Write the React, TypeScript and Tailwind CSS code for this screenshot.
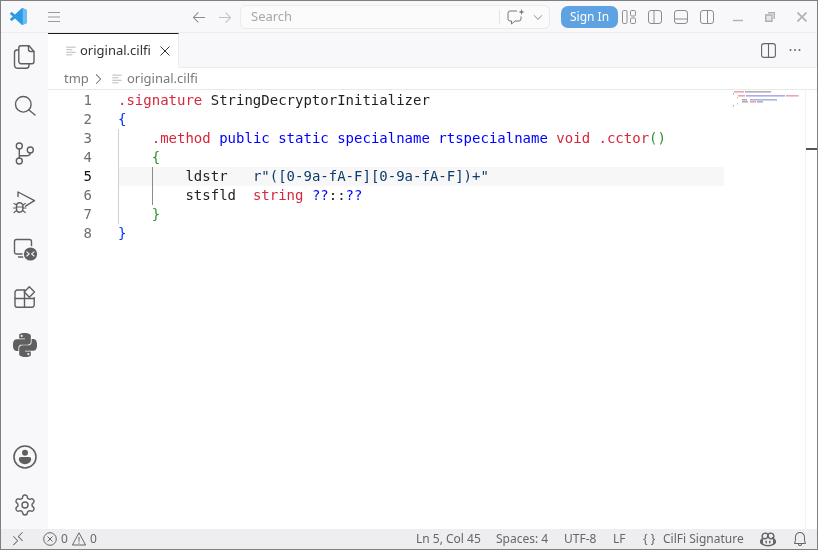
import React from "react";
import {
  VscArrowLeft, VscArrowRight, VscCopilot, VscBell, VscRemote, VscChevronDown, VscChevronRight,
} from "react-icons/vsc";
import { SiPython } from "react-icons/si";
import { Settings } from "lucide-react";

const R = ({ c, children }: { c: string; children: React.ReactNode }) => <span className={c}>{children}</span>;

const FileLines = ({ className }: { className: string }) => (
  <svg viewBox="0 0 14 14" className={className} fill="none" stroke="currentColor" strokeWidth="1">
    <path d="M1.5 2.5h11M1.5 5.5h7M1.5 8.5h11M1.5 11.5h7" />
  </svg>
);

const Ic = ({ children }: { children: React.ReactNode }) => (
  <div className="h-[48px] w-full flex items-center justify-center shrink-0">
    <svg viewBox="0 0 24 24" className="w-[24px] h-[24px] overflow-visible" fill="none" stroke="currentColor" strokeWidth="1.4" strokeLinecap="round" strokeLinejoin="round">
      {children}
    </svg>
  </div>
);

const Box = ({ children }: { children?: React.ReactNode }) => (
  <svg viewBox="0 0 14 14" className="w-[14px] h-[14px] overflow-visible" fill="none" stroke="currentColor" strokeWidth="1">
    <rect x="0.5" y="0.5" width="13" height="13" rx="2.5" />
    {children}
  </svg>
);

const lines: React.ReactNode[] = [
  <><R c="text-[#d7263d]">.signature</R> StringDecryptorInitializer</>,
  <R c="text-[#0431fa]">{"{"}</R>,
  <>{"    "}<R c="text-[#d7263d]">.method</R> <R c="text-[#0000ff]">public static specialname rtspecialname</R> <R c="text-[#d7263d]">void .cctor</R><R c="text-[#319331]">()</R></>,
  <>{"    "}<R c="text-[#319331]">{"{"}</R></>,
  <>{"        "}ldstr{"   "}<R c="text-[#0f3a6b]">r"([0-9a-fA-F][0-9a-fA-F])+"</R></>,
  <>{"        "}stsfld{"  "}<R c="text-[#d7263d]">string</R> <R c="text-[#0000ff]">??</R>::<R c="text-[#0000ff]">??</R></>,
  <>{"    "}<R c="text-[#319331]">{"}"}</R></>,
  <R c="text-[#0431fa]">{"}"}</R>,
];

const RED = "#f0a3ad";
const BLU = "#a9a9f8";
const GRY = "#b0b0b0";
const GRN = "#b3d6b3";
const mini: [number, number, number, string][] = [
  [0, 0, 10, RED], [11, 0, 26, GRY],
  [-1, 2, 1, BLU],
  [4, 4, 7, RED], [12, 4, 39, BLU], [52, 4, 11, RED], [63, 4, 2, GRN],
  [3, 6, 1, GRN],
  [8, 8, 5, GRY], [16, 8, 27, "#a9bad2"],
  [8, 10, 6, GRY], [16, 10, 6, RED], [23, 10, 2, BLU], [25, 10, 2, GRY], [27, 10, 2, BLU],
  [3, 12, 1, GRN],
  [-1, 14, 1, BLU],
];

export default function App() {
  return (
    <div className="w-[818px] h-[550px] flex flex-col overflow-hidden bg-white border border-[#7f7f7f] font-['Noto_Sans',sans-serif] text-[13px] text-[#616161] [&_span]:[will-change:transform]">
      {/* title bar */}
      <div className="h-[32px] shrink-0 flex items-center bg-[#f8f8fa] border-b border-[#ececec]">
        <svg viewBox="0 0 100 100" className="w-[17px] h-[17px] ml-[9px]">
          <path fill="#2f9ae4" d="M70.9119 99.3171C72.4869 99.9307 74.2828 99.8914 75.8725 99.1264L96.4608 89.2197C98.6242 88.1787 100 85.9892 100 83.5872V16.4133C100 14.0113 98.6243 11.8218 96.4609 10.7808L75.8725 0.873756C73.7862 -0.130129 71.3446 0.11576 69.5135 1.44695C69.252 1.63711 69.0028 1.84943 68.769 2.08341L29.3551 38.0415L12.1872 25.0096C10.589 23.7965 8.35363 23.8959 6.86933 25.2461L1.36303 30.2549C-0.452552 31.9064 -0.454633 34.7627 1.35853 36.417L16.2471 50.0001L1.35853 63.5832C-0.454633 65.2374 -0.452552 68.0938 1.36303 69.7453L6.86933 74.7541C8.35363 76.1043 10.589 76.2037 12.1872 74.9905L29.3551 61.9587L68.769 97.9167C69.3925 98.5406 70.1246 99.0104 70.9119 99.3171ZM75.0152 27.2989L45.1091 50.0001L75.0152 72.7012V27.2989Z" />
          <path fill="#6dbdf3" d="M96.4614 10.7962L75.8569 0.875542C73.4719 -0.272773 70.6217 0.211611 68.75 2.08333C71.0562 -0.223028 75 1.41031 75 4.67179V95.3281C75 98.5896 71.0562 100.223 68.75 97.9167C70.6217 99.7884 73.4719 100.273 75.8569 99.1244L96.4614 89.2038C98.6242 88.1624 100 85.9728 100 83.5728V16.4272C100 14.0272 98.6242 11.8376 96.4614 10.7962Z" />
        </svg>
        <svg viewBox="0 0 12 10" className="w-[12px] h-[10px] ml-[21px] text-[#9a9a9a]" fill="none" stroke="currentColor" strokeWidth="1"><path d="M0 .5h12M0 5h12M0 9.5h12" /></svg>
        <VscArrowLeft className="w-[16px] h-[16px] ml-[131px] text-[#8c8c8c]" />
        <VscArrowRight className="w-[16px] h-[16px] ml-[10px] text-[#c0c0c0]" />
        <div className="ml-[7px] w-[310px] h-[24px] rounded-md border border-[#eaeaea] bg-[#fbfbfc] flex items-center pl-[10px] text-[#a8a8a8]">
          <span>Search</span>
          <div className="ml-auto w-px h-[14px] bg-[#e4e4e4]" />
          <svg viewBox="0 0 18 16" className="w-[18px] h-[16px] ml-[7px] overflow-visible text-[#777]" fill="none" stroke="currentColor" strokeWidth="1" strokeLinejoin="round">
            <path d="M10 2H3a2 2 0 0 0-2 2v6a2 2 0 0 0 2 2h1.5v3l3.5-3h4a2 2 0 0 0 2-2V7.5" />
            <path d="M14.5 0l.8 2.2 2.2.8-2.2.8-.8 2.2-.8-2.2-2.2-.8 2.2-.8z" fill="currentColor" stroke="none" />
          </svg>
          <VscChevronDown className="w-[14px] h-[14px] ml-[6px] mr-[4px] text-[#999]" />
        </div>
        <div className="ml-[11px] w-[57px] h-[22px] rounded-[7px] bg-[#5ea2e2] text-white text-[12px] flex items-center justify-center"><span>Sign In</span></div>
        <div className="ml-[4px] flex items-center gap-[12px] text-[#8c8c8c]">
          <svg viewBox="0 0 14 14" className="w-[14px] h-[14px]" fill="none" stroke="currentColor"><rect x="0.5" y="0.5" width="4.5" height="13" rx="1.2" /><rect x="8.5" y="0.5" width="5" height="5.5" rx="1.2" /><rect x="8.5" y="8" width="5" height="5.5" rx="1.2" /></svg>
          <Box><path d="M6 .5v13" /></Box>
          <Box><path d="M.5 9h13" /></Box>
          <Box><path d="M7.5 .5v13" /></Box>
        </div>
        <div className="ml-auto flex items-center gap-[22px] mr-[10px] text-[#b0b0b0]">
          <svg viewBox="0 0 10 10" className="w-[10px] h-[10px]" fill="none" stroke="currentColor" strokeWidth="1.4"><path d="M0 8.5h10" /></svg>
          <svg viewBox="0 0 10 10" className="w-[10px] h-[10px]" fill="none" stroke="currentColor" strokeWidth="1.4"><path d="M.7 3h6.3v6.3H.7z" fill="currentColor" fillOpacity="0.25" /><path d="M3 .7h6.3V7" /></svg>
          <svg viewBox="0 0 10 10" className="w-[10px] h-[10px]" fill="none" stroke="currentColor" strokeWidth="1.6"><path d="M.5.5l9 9M9.5.5l-9 9" /></svg>
        </div>
      </div>

      <div className="flex-1 flex min-h-0">
        {/* activity bar */}
        <div className="w-[47px] shrink-0 bg-[#f8f8fa] flex flex-col items-center text-[#5f5f5f]">
          <Ic>
            <path d="M8 .8h8l5 5.7v10a2.2 2.2 0 0 1-2.2 2.2H8a2.2 2.2 0 0 1-2.2-2.2V3A2.2 2.2 0 0 1 8 .8z" />
            <path d="M15.5 1v3.5a2 2 0 0 0 2 2h3.3" />
            <path d="M5.5 5H4A2.6 2.6 0 0 0 1.5 7.5v12.2A3.6 3.6 0 0 0 5 23.3h8.5a2.6 2.6 0 0 0 2.5-2.5v-1.8" />
          </Ic>
          <Ic>
            <circle cx="10.3" cy="11.3" r="7.8" />
            <path d="M16 17l6 5" />
          </Ic>
          <Ic>
            <circle cx="6.3" cy="5" r="3" />
            <circle cx="17.3" cy="9" r="3" />
            <circle cx="6.3" cy="20" r="3" />
            <path d="M6.3 8v9M17.3 12a3 3 0 0 1-3 2.7H6.3" />
          </Ic>
          <Ic>
            <path d="M5 7.5V3l16.5 8.7-9 5.5" />
            <path d="M3.5 17a3.2 3.2 0 0 1 6.4 0v3a3.2 3.2 0 0 1-6.4 0z" strokeWidth="1.4" />
            <path d="M3.5 18h6.4M1 14.5l2.7 1.5M12.3 14.5L9.7 16M.5 19h3M10 19h3M1 23.5l2.7-2M12.3 23.5l-2.7-2" strokeWidth="1.2" />
          </Ic>
          <Ic>
            <rect x="1.5" y="2.5" width="17" height="14.5" rx="2" />
            <path d="M5.5 20h6" />
            <circle cx="17.5" cy="17" r="8" fill="#f8f8fa" stroke="none" />
            <circle cx="17.5" cy="17" r="6.6" fill="currentColor" stroke="none" />
            <path d="M13.8 14.8l2.4 2-2.4 2.2M21 14.8l-2.4 2 2.4 2.2" stroke="#f8f8fa" strokeWidth="1.1" />
          </Ic>
          <Ic>
            <path d="M11.5 5H4.2a2.2 2.2 0 0 0-2.2 2.2V20a2.2 2.2 0 0 0 2.2 2.2H19a2.2 2.2 0 0 0 2.2-2.2v-7" />
            <path d="M2 13.5h19.2V13M11.5 5v17" />
            <path d="M16.3 1.8l5.2 5.2-5.2 5.2-5-5.2z" />
          </Ic>
          <div className="h-[48px] w-full flex items-center justify-center shrink-0">
            <SiPython className="w-[24px] h-[24px]" />
          </div>
          <div className="mt-auto w-full">
            <Ic>
              <circle cx="12" cy="12" r="11" strokeWidth="1.6" />
              <circle cx="12" cy="7.8" r="3" fill="currentColor" stroke="none" />
              <path d="M5.8 14a2 2 0 0 1 2-2h8.4a2 2 0 0 1 2 2c0 3-3 5.2-6.2 5.2S5.8 17 5.8 14z" fill="currentColor" stroke="none" />
            </Ic>
            <div className="h-[48px] w-full flex items-center justify-center">
              <Settings className="w-[24px] h-[24px]" strokeWidth={1.4} />
            </div>
          </div>
        </div>

        {/* editor column */}
        <div className="flex-1 flex flex-col min-w-0">
          <div className="h-[35px] shrink-0 flex bg-[#f8f8fa] border-b border-[#ececec]">
            <div className="w-[131px] h-[35px] bg-white border-t border-t-[#1a1a1a] border-r border-r-[#ececec] flex items-center pl-[17px]">
              <FileLines className="w-[12px] h-[12px] text-[#b0b0b0]" />
              <span className="ml-[3px] text-[#333]">original.cilfi</span>
              <svg viewBox="0 0 10 10" className="w-[10px] h-[10px] ml-[9px] text-[#333]" fill="none" stroke="currentColor" strokeWidth="1"><path d="M.5.5l9 9M9.5.5l-9 9" /></svg>
            </div>
            <div className="ml-auto flex items-center gap-[11px] mr-[14px] text-[#666]">
              <svg viewBox="0 0 15 15" className="w-[15px] h-[15px]" fill="none" stroke="currentColor" strokeWidth="1.1"><rect x="0.6" y="0.6" width="13.8" height="13.8" rx="2.5" /><path d="M7.5 .6v13.8" /></svg>
              <svg viewBox="0 0 16 16" className="w-[16px] h-[16px]" fill="currentColor"><circle cx="3.5" cy="8" r="1" /><circle cx="8" cy="8" r="1" /><circle cx="12.5" cy="8" r="1" /></svg>
            </div>
          </div>
          <div className="h-[22px] shrink-0 flex items-center pl-[16px] text-[#7a7a7a] border-b border-[#e9e9e9]">
            <span className="pt-[1px]">tmp</span>
            <VscChevronRight className="w-[16px] h-[16px] ml-[1px] text-[#666]" />
            <FileLines className="w-[12px] h-[12px] ml-[5px] text-[#b0b0b0]" />
            <span className="ml-[4px] pt-[1px]">original.cilfi</span>
          </div>

          <div className="flex-1 flex min-h-0 font-['DejaVu_Sans_Mono',monospace] text-[14px] leading-[19px]">
            {/* gutter */}
            <div className="w-[70px] shrink-0 pt-[1px] text-[#6e6e6e] text-right [will-change:transform]">
              {lines.map((_, i) => (
                <div key={i} className={i === 4 ? "h-[19px] pr-[26px] text-[#111]" : "h-[19px] pr-[26px]"}>{i + 1}</div>
              ))}
            </div>
            {/* code */}
            <div className="relative w-[606px] shrink-0 pt-[1px] text-[#222] whitespace-pre">
              <div className="absolute left-0 right-0 top-[77px] h-[19px] bg-[#f7f7f7]" />
              <div className="absolute left-0 top-[39px] h-[95px] w-px bg-[#d0d0d0]" />
              <div className="absolute left-[34px] top-[77px] h-[38px] w-px bg-[#8c8c8c]" />
              <div className="relative [will-change:transform] [&_span]:[will-change:auto]">
                {lines.map((l, i) => <div key={i} className="h-[19px]">{l}</div>)}
              </div>
            </div>
            {/* minimap */}
            <div className="w-[81px] shrink-0 pl-[9px] pt-[1px]">
              <svg viewBox="-1 0 72 16" className="w-[72px] h-[16px] block">
                {mini.map(([x, y, w, f], i) => <rect key={i} x={x} y={y} width={w} height="1.6" fill={f} />)}
              </svg>
            </div>
            {/* ruler */}
            <div className="relative flex-1 border-l border-[#f2f2f2]">
              <div className="absolute left-0 right-0 top-[58px] h-[2px] bg-[#555]" />
            </div>
          </div>
        </div>
      </div>

      {/* status bar */}
      <div className="h-[20px] shrink-0 flex items-center bg-[#eeeef0] text-[12px] text-[#666]">
        <VscRemote className="w-[16px] h-[16px] ml-[9px]" />
        <svg viewBox="0 0 14 14" className="w-[14px] h-[14px] ml-[17px]" fill="none" stroke="currentColor" strokeWidth="1"><circle cx="7" cy="7" r="6.3" /><path d="M4.5 4.5l5 5M9.5 4.5l-5 5" /></svg>
        <span className="ml-[4px]">0</span>
        <svg viewBox="0 0 14 14" className="w-[14px] h-[14px] ml-[4px]" fill="none" stroke="currentColor" strokeWidth="1" strokeLinejoin="round"><path d="M7 .8L13.6 13H.4z" /><path d="M7 5v4.5M7 10.5v1.2" /></svg>
        <span className="ml-[4px]">0</span>
        <span className="ml-auto">Ln 5, Col 45</span>
        <span className="ml-[15px]">Spaces: 4</span>
        <span className="ml-[16px]">UTF-8</span>
        <span className="ml-[16px]">LF</span>
        <span className="ml-[18px] whitespace-pre">{"{ }"}</span>
        <span className="ml-[8px]">CilFi Signature</span>
        <VscCopilot className="w-[16px] h-[16px] ml-[16px]" />
        <VscBell className="w-[16px] h-[16px] ml-[16px] mr-[9px]" />
      </div>
    </div>
  );
}
